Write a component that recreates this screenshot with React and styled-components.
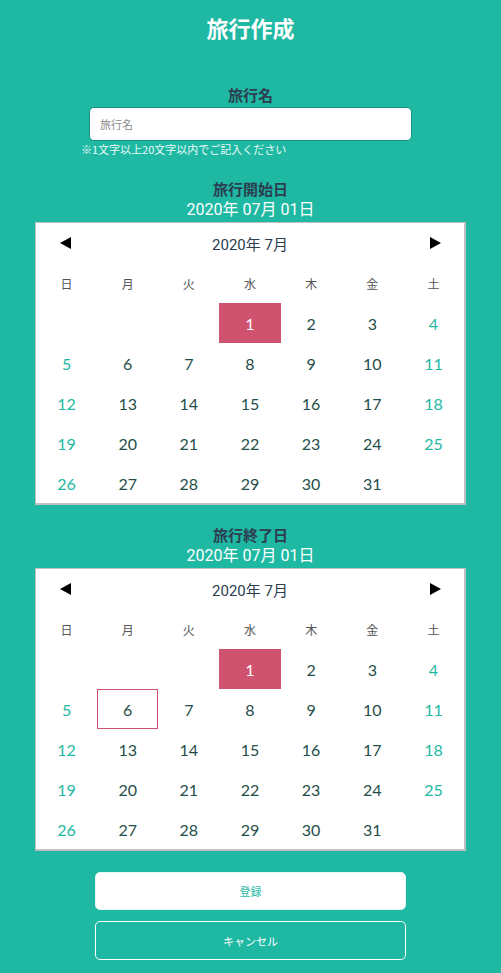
import React, { useState } from "react";
import styled, { createGlobalStyle } from "styled-components";

const GlobalStyle = createGlobalStyle`
    html, body {
        margin:0;
        padding:0;
        background-color:#1EB8A3;
    }
    body {
        font-family: Roboto, "Noto Sans CJK JP", sans-serif;
        color:#2c3e50;
    }
`

const Page = styled.div`
    width:501px;
    min-height:973px;
    background-color:#1EB8A3;
    display:flex;
    flex-direction:column;
    align-items:center;
    box-sizing:border-box;
`

const Title = styled.h1`
    margin:9px 0 0;
    height:36px;
    line-height:36px;
    font-size:22px;
    font-weight:700;
    color:#ffffff;
    font-family:"Noto Sans CJK JP", sans-serif;
`

const Label = styled.div`
    font-family:"Noto Sans CJK JP", sans-serif;
    font-size:15px;
    font-weight:700;
    color:#2c3e50;
    line-height:20px;
    margin-top:${props => props.top}px;
`

const NameBlock = styled.div`
    width:337px;
    display:flex;
    flex-direction:column;
    align-items:center;
`

const Input = styled.input`
    width:323px;
    height:34px;
    box-sizing:border-box;
    margin-top:2px;
    border:1px solid #17917f;
    border-radius:5px;
    padding:0 10px;
    font-size:11px;
    font-family:"Noto Sans CJK JP", sans-serif;
    outline:none;
    &::placeholder {
        color:#8a8a8a;
    }
`

const Hint = styled.div`
    align-self:flex-start;
    margin-left:-1px;
    font-size:11px;
    line-height:16px;
    color:#eafaf7;
    font-family:"Noto Sans CJK JP", sans-serif;
`

const DateText = styled.div`
    font-size:16px;
    line-height:22px;
    color:#ffffff;
    font-family:Roboto, "Noto Sans CJK JP", sans-serif;
`

const Calendar = styled.div`
    width:431px;
    box-sizing:border-box;
    background-color:#ffffff;
    border:1px solid #c0c0c0;
    border-right-width:2px;
    border-bottom-width:2px;
    margin-top:1px;
`

const CalHeader = styled.div`
    height:40px;
    display:flex;
    align-items:center;
    justify-content:space-between;
    padding:0 23px;
`

const Arrow = styled.button`
    border:none;
    background:none;
    padding:0;
    width:12px;
    height:12px;
    display:flex;
    align-items:center;
    justify-content:center;
    cursor:pointer;
`

const MonthTitle = styled.div`
    font-size:15px;
    color:#2c3e50;
    font-family:Roboto, "Noto Sans CJK JP", sans-serif;
`

const Grid = styled.div`
    display:grid;
    grid-template-columns:repeat(7, 1fr);
    grid-auto-rows:40px;
`

const WeekDay = styled.div`
    display:flex;
    align-items:center;
    justify-content:center;
    font-size:12px;
    color:#555;
    font-family:"Noto Sans CJK JP", sans-serif;
`

const Day = styled.div`
    display:flex;
    align-items:center;
    justify-content:center;
    box-sizing:border-box;
    font-size:16px;
    font-family:Lato, sans-serif;
    color:${props => props.selected ? "#ffffff" : props.weekend ? "#1EB8A3" : "#1f4e49"};
    background-color:${props => props.selected ? "#CF526E" : "transparent"};
    border:1px solid ${props => props.today ? "#CF526E" : "transparent"};
    cursor:pointer;
`

const Buttons = styled.div`
    width:311px;
    margin-top:21px;
    display:flex;
    flex-direction:column;
    gap:11px;
`

const Button = styled.button`
    height:${props => props.outline ? 39 : 38}px;
    border-radius:5px;
    border:1px solid ${props => props.outline ? "#ffffff" : "#e6f7f4"};
    background-color:${props => props.outline ? "transparent" : "#ffffff"};
    color:${props => props.outline ? "#ffffff" : "#1EB8A3"};
    font-size:11px;
    font-family:"Noto Sans CJK JP", sans-serif;
    cursor:pointer;
`

const weekdays = ["日", "月", "火", "水", "木", "金", "土"];

const Triangle = ({dir}) => (
    <svg width="11" height="12" viewBox="0 0 11 12">
        {dir === "left"
            ? <polygon points="11,0 11,12 0,6" fill="#000" />
            : <polygon points="0,0 0,12 11,6" fill="#000" />}
    </svg>
)

//July 2020 starts on Wednesday
const MonthCalendar = ({selected, today}) => {
    const cells = [];
    for (let i = 0; i < 3; i++) cells.push(null);
    for (let d = 1; d <= 31; d++) cells.push(d);

    return (
        <Calendar>
            <CalHeader>
                <Arrow><Triangle dir="left"/></Arrow>
                <MonthTitle>2020年 7月</MonthTitle>
                <Arrow><Triangle dir="right"/></Arrow>
            </CalHeader>
            <Grid>
                {weekdays.map(w => <WeekDay key={w}>{w}</WeekDay>)}
                {cells.map((d, i) => {
                    if (d === null) return <div key={"e" + i}/>;
                    const col = i % 7;
                    return (
                        <Day key={d}
                            weekend={col === 0 || col === 6}
                            selected={d === selected}
                            today={d === today}>
                            {d}
                        </Day>
                    )
                })}
            </Grid>
        </Calendar>
    )
}

const App = () => {
    const [name, setName] = useState("");

    return (
        <Page>
            <GlobalStyle/>
            <Title>旅行作成</Title>

            <NameBlock>
                <Label top={40}>旅行名</Label>
                <Input placeholder="旅行名" value={name} onChange={e => setName(e.target.value)}/>
                <Hint>※1文字以上20文字以内でご記入ください</Hint>
            </NameBlock>

            <Label top={22}>旅行開始日</Label>
            <DateText>2020年 07月 01日</DateText>
            <MonthCalendar selected={1}/>

            <Label top={20}>旅行終了日</Label>
            <DateText>2020年 07月 01日</DateText>
            <MonthCalendar selected={1} today={6}/>

            <Buttons>
                <Button>登録</Button>
                <Button outline>キャンセル</Button>
            </Buttons>
        </Page>
    )
}

export default App;
